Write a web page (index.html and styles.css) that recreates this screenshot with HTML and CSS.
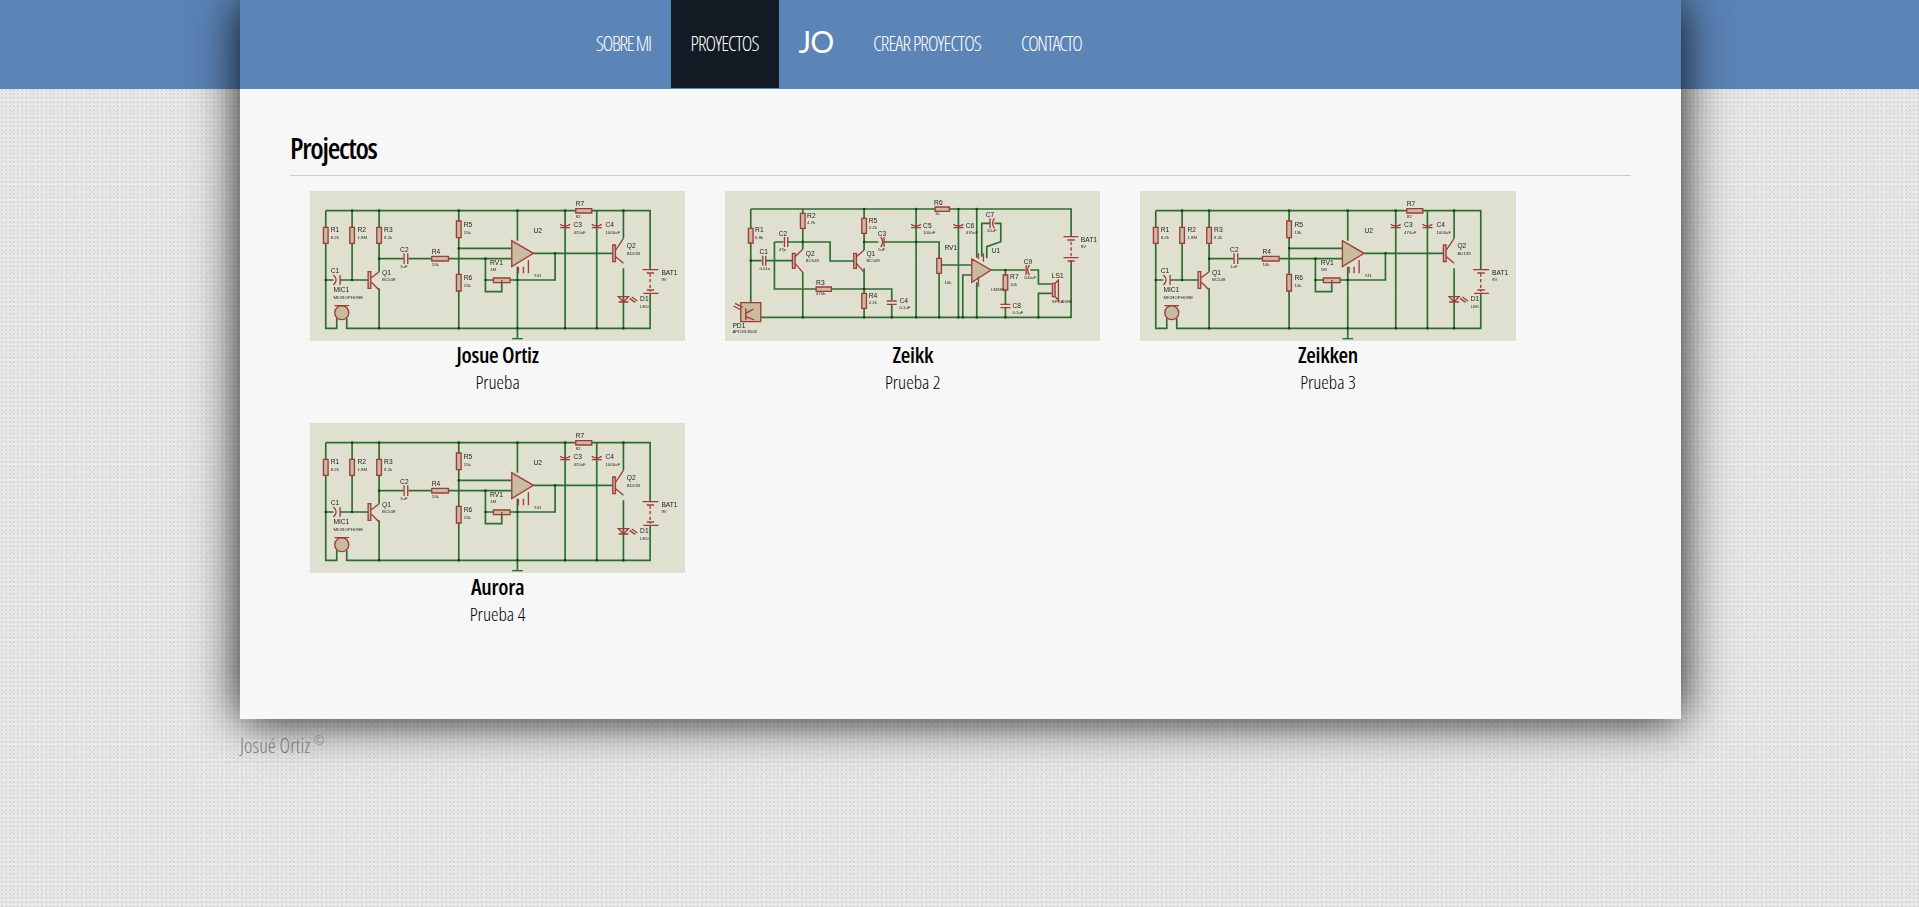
FILE: index.html
```html
<!DOCTYPE html>
<html lang="es">
<head>
    <meta charset="UTF-8">
    <meta name="viewport" content="width=device-width, initial-scale=1.0">
    <title>Proyectos</title>
    <link rel="stylesheet" href="styles.css">
</head>
<body>
    <div class="page">
        <nav class="nav">
            <a class="nav-item tight" href="#">SOBRE MI</a>
            <a class="nav-item active" href="#">PROYECTOS</a>
            <a class="nav-item logo" href="#">JO</a>
            <a class="nav-item" href="#">CREAR PROYECTOS</a>
            <a class="nav-item tight" href="#">CONTACTO</a>
        </nav>
        <main class="content">
            <h2 class="title">Projectos</h2>
            <div class="projects">
                <div class="project">
                    <svg class="thumb" viewBox="30 18 1125 450">
                        <g class="sch">
                            <path class="wire" d="M77 77H1050V255M1050 325V430H140V400M110 400V430H77V77M156 77V285M237 77V260M237 310V430M77 285H100M120 285H205M237 221H310M325 221H395M445 221H635M476 77V430M476 190H635M556 221V320H605V295M556 285H580M630 285H765V205M700 205H945M970 77V160M970 250V430M652 77V167M652 245V460M795 77V430M890 77V430"/>
                            <path class="earth" d="M636 461H668"/>
                            <path class="body" d="M70 127h14v48h-14zM149 127h14v48h-14zM230 127h14v48h-14zM469 108h14v50h-14zM469 268h14v50h-14zM395 214h50v14h-50zM580 279h50v14h-50zM827 71h48v13h-48zM204 260h8v50h-8zM938 180h8v50h-8zM635 167V245L700 205Z"/>
                            <circle class="body" cx="125" cy="383" r="21"/>
                            <path class="part" d="M312 205V237M323 205V237M100 270Q116 285 100 300M120 270V300M1027 254H1075M1040 264H1062M1030 325H1075M1040 315H1062M780 118Q795 128 810 118M780 128H810M875 118Q890 128 905 118M875 128H905M103 362H147M237 260L214 278M214 292L237 315M970 160L947 195M947 215L970 235M955 335H985L970 351ZM955 351H985M988 340L1005 352M995 336L1012 348M605 295V285M655 245V265M670 245V265M685 225V265"/>
                            <path class="dash" d="M1050 265V320"/>
                            <path class="dots" d="M77 285h.1M156 77h.1M237 77h.1M156 285h.1M237 221h.1M476 77h.1M476 190h.1M476 430h.1M237 430h.1M556 221h.1M556 285h.1M652 77h.1M652 285h.1M652 430h.1M765 205h.1M795 77h.1M795 430h.1M890 430h.1M970 77h.1M970 430h.1"/>
                            <text x="92" y="141">R1</text><text class="sm" x="92" y="161">8.2k</text>
                            <text x="172" y="141">R2</text><text class="sm" x="172" y="161">1.8M</text>
                            <text x="252" y="141">R3</text><text class="sm" x="252" y="161">8.2k</text>
                            <text x="491" y="125">R5</text><text class="sm" x="491" y="146">15k</text>
                            <text x="491" y="285">R6</text><text class="sm" x="491" y="306">15k</text>
                            <text x="395" y="208">R4</text><text class="sm" x="395" y="243">10k</text>
                            <text x="827" y="64">R7</text><text class="sm" x="827" y="98">82</text>
                            <text x="300" y="200">C2</text><text class="sm" x="300" y="250">1uF</text>
                            <text x="92" y="263">C1</text>
                            <text x="100" y="322">MIC1</text><text class="sm" x="100" y="341">MICROPHONE</text>
                            <text x="246" y="269">Q1</text><text class="sm" x="246" y="288">BC548</text>
                            <text x="570" y="239">RV1</text><text class="sm" x="570" y="259">1M</text>
                            <text x="700" y="143">U2</text><text class="sm" x="702" y="276">741</text>
                            <text x="820" y="126">C3</text><text class="sm" x="820" y="146">470uF</text>
                            <text x="916" y="126">C4</text><text class="sm" x="916" y="146">1000uF</text>
                            <text x="980" y="190">Q2</text><text class="sm" x="980" y="209">BD139</text>
                            <text x="1084" y="269">BAT1</text><text class="sm" x="1084" y="289">9V</text>
                            <text x="1020" y="349">D1</text><text class="sm" x="1020" y="369">LED</text>
                        </g>
                    </svg>
                    <h3>Josue Ortiz</h3>
                    <p>Prueba</p>
                </div>
                <div class="project">
                    <svg class="thumb" viewBox="30 18 1125 450">
                        <g class="sch">
                            <path class="wire" d="M107 72H1068V155M1068 225V397H137M107 72V355M107 227H140M152 227H235M263 72V193M263 262V397M178 171H205M218 171H345V228H418M447 72V195M447 250V397M447 171H490M505 171H672V397M680 240H770M178 171V312H530V345M530 358V397M603 72V397M730 72V397M785 72V218M785 292V397M743 397V270H770M828 255H930M945 255H970V297H1010M1010 325H970V397M871 255V358M871 368V397M800 215V115H825M838 115H857V170L815 185V220"/>
                            <path class="body" d="M100 130h14v44h-14zM256 85h14v45h-14zM440 100h14v45h-14zM440 325h14v45h-14zM303 306h46v13h-46zM660 66h43v13h-43zM665 220h14v45h-14zM864 270h14v45h-14zM232 205h8v45h-8zM416 205h8v45h-8zM77 353h60v57h-60zM1012 295h8v40h-8zM770 222V292L828 255Z"/>
                            <path class="part" d="M143 212V242M152 212V242M208 156V186M218 156V186M497 156Q508 171 497 186M507 156V186M933 240V270M943 240Q932 255 943 270M825 100V130M838 100Q827 115 838 130M588 118Q603 128 618 118M588 128H618M715 118Q730 128 745 118M715 128H745M515 348H545M515 358H545M856 358H886M856 368H886M1045 155H1090M1057 165H1079M1045 218H1090M1057 228H1079M263 193L240 215M240 235L263 262M447 195L424 215M424 235L447 262M790 205V222M805 205V230M790 275V305M55 363L78 375M60 355L83 367M115 372L92 385M92 395L118 405M92 370V405M1020 295L1030 285V345L1020 335"/>
                            <path class="dash" d="M1068 170V215"/>
                            <path class="dots" d="M107 227h.1M263 171h.1M263 397h.1M447 72h.1M447 171h.1M447 312h.1M447 397h.1M530 397h.1M603 72h.1M603 171h.1M603 397h.1M672 397h.1M730 72h.1M730 397h.1M743 397h.1M785 72h.1M785 397h.1M871 255h.1M871 397h.1M970 397h.1"/>
                            <text x="120" y="142">R1</text><text class="sm" x="120" y="162">6.8k</text>
                            <text x="276" y="100">R2</text><text class="sm" x="276" y="118">4.7k</text>
                            <text x="461" y="113">R5</text><text class="sm" x="461" y="132">2.2k</text>
                            <text x="461" y="339">R4</text><text class="sm" x="461" y="358">2.2k</text>
                            <text x="303" y="300">R3</text><text class="sm" x="303" y="331">470k</text>
                            <text x="657" y="60">R6</text><text class="sm" x="660" y="90">1k</text>
                            <text x="191" y="152">C2</text><text class="sm" x="191" y="198">47p</text>
                            <text x="133" y="208">C1</text><text class="sm" x="133" y="254">0.01u</text>
                            <text x="272" y="214">Q2</text><text class="sm" x="272" y="232">BC549</text>
                            <text x="454" y="214">Q1</text><text class="sm" x="454" y="232">BC549</text>
                            <text x="488" y="152">C3</text><text class="sm" x="488" y="198">1uF</text>
                            <text x="624" y="128">C5</text><text class="sm" x="624" y="146">100uF</text>
                            <text x="752" y="128">C6</text><text class="sm" x="752" y="146">470uF</text>
                            <text x="812" y="95">C7</text><text class="sm" x="815" y="141">10uF</text>
                            <text x="830" y="203">U1</text><text class="sm" x="828" y="317">LM386</text>
                            <text x="688" y="195">RV1</text><text class="sm" x="688" y="296">10k</text>
                            <text x="885" y="283">R7</text><text class="sm" x="885" y="302">10k</text>
                            <text x="926" y="236">C9</text><text class="sm" x="926" y="283">100uF</text>
                            <text x="892" y="368">C8</text><text class="sm" x="892" y="386">0.1uF</text>
                            <text x="553" y="355">C4</text><text class="sm" x="553" y="373">0.1uF</text>
                            <text x="1010" y="280">LS1</text><text class="sm" x="1010" y="353">SPEAKER</text>
                            <text x="1097" y="170">BAT1</text><text class="sm" x="1097" y="188">9V</text>
                            <text x="52" y="428">PD1</text><text class="sm" x="52" y="444">APD33-8002</text>
                        </g>
                    </svg>
                    <h3>Zeikk</h3>
                    <p>Prueba 2</p>
                </div>
                <div class="project">
                    <svg class="thumb" viewBox="30 18 1125 450">
                        <g class="sch">
                            <path class="wire" d="M77 77H1052V255M1052 325V430H140V400M110 400V430H77V77M156 77V285M237 77V260M237 310V430M77 285H100M120 285H205M237 221H310M325 221H397M447 221H636M477 77V430M477 190H636M556 221V320H605V295M556 285H580M630 285H766V205M702 205H945M972 77V160M972 250V430M653 77V167M653 245V460M797 77V430M892 77V430"/>
                            <path class="earth" d="M637 461H669"/>
                            <path class="body" d="M70 127h14v48h-14zM149 127h14v48h-14zM230 127h14v48h-14zM470 108h14v50h-14zM470 268h14v50h-14zM397 214h50v14h-50zM580 279h50v14h-50zM830 71h48v13h-48zM204 260h8v50h-8zM940 180h8v50h-8zM637 167V245L702 205Z"/>
                            <circle class="body" cx="125" cy="383" r="21"/>
                            <path class="part" d="M312 205V237M323 205V237M100 270Q116 285 100 300M120 270V300M1029 254H1077M1042 264H1064M1032 325H1077M1042 315H1064M782 118Q797 128 812 118M782 128H812M877 118Q892 128 907 118M877 128H907M103 362H147M237 260L214 278M214 292L237 315M972 160L949 195M949 215L972 235M957 335H987L972 351ZM957 351H987M990 340L1007 352M997 336L1014 348M605 295V285M657 245V265M672 245V265M687 225V265"/>
                            <path class="dash" d="M1052 265V320"/>
                            <path class="dots" d="M77 285h.1M156 77h.1M237 77h.1M156 285h.1M237 221h.1M477 77h.1M477 190h.1M477 430h.1M237 430h.1M556 221h.1M556 285h.1M653 77h.1M653 285h.1M653 430h.1M766 205h.1M797 77h.1M797 430h.1M892 430h.1M972 77h.1M972 430h.1"/>
                            <text x="92" y="141">R1</text><text class="sm" x="92" y="161">8.2k</text>
                            <text x="172" y="141">R2</text><text class="sm" x="172" y="161">1.8M</text>
                            <text x="252" y="141">R3</text><text class="sm" x="252" y="161">8.2k</text>
                            <text x="493" y="125">R5</text><text class="sm" x="493" y="146">13k</text>
                            <text x="493" y="285">R6</text><text class="sm" x="493" y="306">15k</text>
                            <text x="397" y="208">R4</text><text class="sm" x="397" y="243">10k</text>
                            <text x="830" y="64">R7</text><text class="sm" x="830" y="98">82</text>
                            <text x="300" y="200">C2</text><text class="sm" x="300" y="250">1uF</text>
                            <text x="92" y="263">C1</text>
                            <text x="100" y="322">MIC1</text><text class="sm" x="100" y="341">MICROPHONE</text>
                            <text x="246" y="269">Q1</text><text class="sm" x="246" y="288">BC548</text>
                            <text x="572" y="239">RV1</text><text class="sm" x="572" y="259">1M</text>
                            <text x="703" y="143">U2</text><text class="sm" x="704" y="276">741</text>
                            <text x="822" y="126">C3</text><text class="sm" x="822" y="146">470uF</text>
                            <text x="919" y="126">C4</text><text class="sm" x="919" y="146">1000uF</text>
                            <text x="982" y="190">Q2</text><text class="sm" x="982" y="209">BD139</text>
                            <text x="1086" y="269">BAT1</text><text class="sm" x="1086" y="289">9V</text>
                            <text x="1022" y="349">D1</text><text class="sm" x="1022" y="369">LED</text>
                        </g>
                    </svg>
                    <h3>Zeikken</h3>
                    <p>Prueba 3</p>
                </div>
                <div class="project">
                    <svg class="thumb" viewBox="30 18 1125 450">
                        <g class="sch">
                            <path class="wire" d="M77 77H1050V255M1050 325V430H140V400M110 400V430H77V77M156 77V285M237 77V260M237 310V430M77 285H100M120 285H205M237 221H310M325 221H395M445 221H635M476 77V430M476 190H635M556 221V320H605V295M556 285H580M630 285H765V205M700 205H945M970 77V160M970 250V430M652 77V167M652 245V460M795 77V430M890 77V430"/>
                            <path class="earth" d="M636 461H668"/>
                            <path class="body" d="M70 127h14v48h-14zM149 127h14v48h-14zM230 127h14v48h-14zM469 108h14v50h-14zM469 268h14v50h-14zM395 214h50v14h-50zM580 279h50v14h-50zM827 71h48v13h-48zM204 260h8v50h-8zM938 180h8v50h-8zM635 167V245L700 205Z"/>
                            <circle class="body" cx="125" cy="383" r="21"/>
                            <path class="part" d="M312 205V237M323 205V237M100 270Q116 285 100 300M120 270V300M1027 254H1075M1040 264H1062M1030 325H1075M1040 315H1062M780 118Q795 128 810 118M780 128H810M875 118Q890 128 905 118M875 128H905M103 362H147M237 260L214 278M214 292L237 315M970 160L947 195M947 215L970 235M955 335H985L970 351ZM955 351H985M988 340L1005 352M995 336L1012 348M605 295V285M655 245V265M670 245V265M685 225V265"/>
                            <path class="dash" d="M1050 265V320"/>
                            <path class="dots" d="M77 285h.1M156 77h.1M237 77h.1M156 285h.1M237 221h.1M476 77h.1M476 190h.1M476 430h.1M237 430h.1M556 221h.1M556 285h.1M652 77h.1M652 285h.1M652 430h.1M765 205h.1M795 77h.1M795 430h.1M890 430h.1M970 77h.1M970 430h.1"/>
                            <text x="92" y="141">R1</text><text class="sm" x="92" y="161">8.2k</text>
                            <text x="172" y="141">R2</text><text class="sm" x="172" y="161">1.8M</text>
                            <text x="252" y="141">R3</text><text class="sm" x="252" y="161">8.2k</text>
                            <text x="491" y="125">R5</text><text class="sm" x="491" y="146">15k</text>
                            <text x="491" y="285">R6</text><text class="sm" x="491" y="306">15k</text>
                            <text x="395" y="208">R4</text><text class="sm" x="395" y="243">10k</text>
                            <text x="827" y="64">R7</text><text class="sm" x="827" y="98">82</text>
                            <text x="300" y="200">C2</text><text class="sm" x="300" y="250">1uF</text>
                            <text x="92" y="263">C1</text>
                            <text x="100" y="322">MIC1</text><text class="sm" x="100" y="341">MICROPHONE</text>
                            <text x="246" y="269">Q1</text><text class="sm" x="246" y="288">BC548</text>
                            <text x="570" y="239">RV1</text><text class="sm" x="570" y="259">1M</text>
                            <text x="700" y="143">U2</text><text class="sm" x="702" y="276">741</text>
                            <text x="820" y="126">C3</text><text class="sm" x="820" y="146">470uF</text>
                            <text x="916" y="126">C4</text><text class="sm" x="916" y="146">1000uF</text>
                            <text x="980" y="190">Q2</text><text class="sm" x="980" y="209">BD139</text>
                            <text x="1084" y="269">BAT1</text><text class="sm" x="1084" y="289">9V</text>
                            <text x="1020" y="349">D1</text><text class="sm" x="1020" y="369">LED</text>
                        </g>
                    </svg>
                    <h3>Aurora</h3>
                    <p>Prueba 4</p>
                </div>
            </div>
        </main>
    </div>
    <footer class="footer">Josué Ortiz <sup>©</sup></footer>
</body>
</html>
```

FILE: styles.css
```css
body {
    margin: 0;
    font-family: "Open Sans", sans-serif;
    font-stretch: 75%;
    color: #000;
    background-color: #e7e7e7;
    background-image:
        linear-gradient(#5b84b7 89px, transparent 89px),
        radial-gradient(#d8d8d8 0.8px, transparent 1.2px),
        radial-gradient(#f3f3f3 0.8px, transparent 1.2px),
        radial-gradient(#dcdcdc 0.8px, transparent 1.2px);
    background-size: 100% 100%, 4px 4px, 5px 5px, 7px 7px;
    background-position: 0 0, 0 0, 2px 2px, 1px 3px;
    background-repeat: no-repeat, repeat, repeat, repeat;
    min-height: 907px;
}
.page {
    width: 1441px;
    margin-left: 240px;
    box-shadow: 0 0 45px rgba(0,0,0,0.9);
}
.nav {
    display: flex;
    height: 89px;
    padding-left: 336px;
    background-color: #5b84b7;
}
.nav-item {
    display: block;
    height: 88px;
    padding: 0 20px;
    line-height: 88px;
    font-size: 20px;
    font-weight: 300;
    color: #fff;
    text-decoration: none;
    letter-spacing: -0.9px;
}
.nav-item.tight {
    letter-spacing: -1.3px;
}
.nav-item.active {
    background-color: #121a23;
}
.nav-item.logo {
    font-family: Lato, sans-serif;
    font-size: 30px;
    font-weight: 400;
    line-height: 82px;
    letter-spacing: -1px;
}
.content {
    height: 630px;
    padding: 0 50px;
    background-color: #f8f8f8;
    background-image: radial-gradient(#f4f4f4 0.8px, transparent 1.2px);
    background-size: 4px 4px;
}
.title {
    margin: 0;
    padding-top: 34px;
    height: 52px;
    line-height: 50px;
    font-size: 29px;
    font-weight: 600;
    letter-spacing: -1.3px;
    border-bottom: 1px solid #ccc;
}
.projects {
    display: flex;
    flex-wrap: wrap;
    padding-top: 15px;
}
.project {
    width: 375.2px;
    padding: 0 20px;
    margin-bottom: 30px;
    text-align: center;
}
.project h3 {
    margin: 0;
    font-size: 22px;
    font-weight: 600;
    line-height: 26px;
    letter-spacing: -0.3px;
}
.project p {
    margin: 2px 0 -2px;
    font-size: 19px;
    font-weight: 300;
    line-height: 26px;
}
.thumb {
    display: block;
    width: 100%;
    height: 150px;
    background-color: #dfe0d0;
}
.sch {
    filter: blur(1.3px);
    fill: none;
}
.wire {
    stroke: #2b6e30;
    stroke-width: 5;
}
.earth {
    stroke: #2b6e30;
    stroke-width: 4;
}
.part, .dash {
    stroke: #a23a3a;
    stroke-width: 4;
}
.dash {
    stroke-dasharray: 10 7;
}
.body {
    fill: #c8bc9e;
    stroke: #a23a3a;
    stroke-width: 4;
}
.dots {
    stroke: #14471a;
    stroke-width: 8;
    stroke-linecap: round;
}
.sch text {
    fill: #222;
    font-family: "Liberation Sans", sans-serif;
    font-size: 20px;
}
.sch text.sm {
    font-size: 13px;
}
.footer {
    margin: 15px 0 0 240px;
    font-size: 20px;
    font-weight: 300;
    line-height: 24px;
    letter-spacing: 0.1px;
    color: #777;
}
.footer sup {
    font-size: 13px;
    line-height: 0;
}
```
